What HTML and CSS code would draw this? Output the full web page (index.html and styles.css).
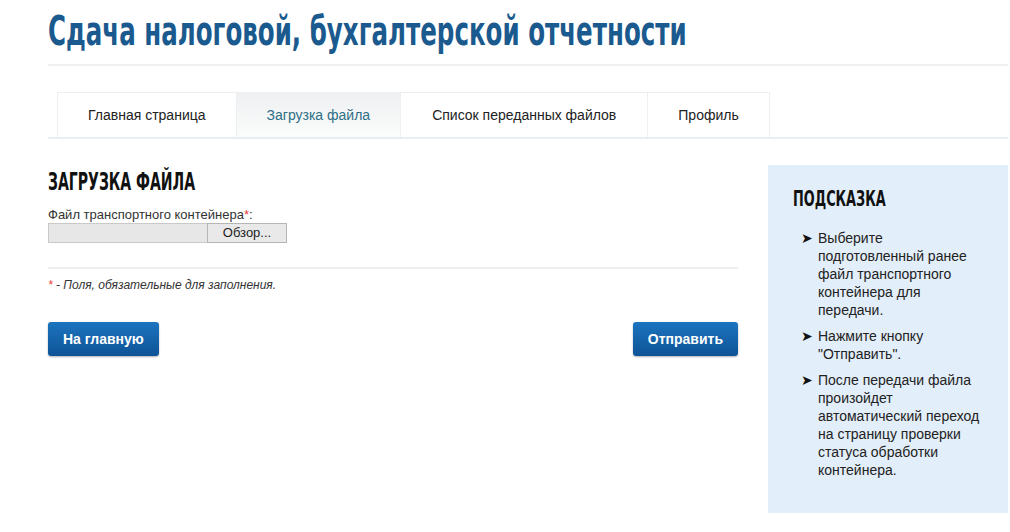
FILE: index.html
```html
<!DOCTYPE html>
<html lang="ru">
<head>
  <meta charset="UTF-8">
  <title>Сдача налоговой, бухгалтерской отчетности</title>
  <link rel="stylesheet" href="styles.css">
</head>
<body>
  <div class="page">
    <div class="title-bar">
      <h1 class="title">Сдача налоговой, бухгалтерской отчетности</h1>
    </div>

    <ul class="tabs">
      <li class="tab">Главная страница</li>
      <li class="tab active">Загрузка файла</li>
      <li class="tab">Список переданных файлов</li>
      <li class="tab">Профиль</li>
    </ul>

    <div class="content">
      <div class="main">
        <h2 class="section-title">Загрузка файла</h2>
        <label class="field-label">Файл транспортного контейнера<span class="req">*</span>:</label>
        <div class="file-input">
          <span class="file-name"></span>
          <span class="file-btn">Обзор...</span>
        </div>
        <div class="note"><span class="req">*</span> - Поля, обязательные для заполнения.</div>
        <div class="actions">
          <button class="btn">На главную</button>
          <button class="btn">Отправить</button>
        </div>
      </div>

      <div class="hint">
        <h3 class="hint-title">Подсказка</h3>
        <ul class="hint-list">
          <li>Выберите подготовленный ранее файл транспортного контейнера для передачи.</li>
          <li>Нажмите кнопку "Отправить".</li>
          <li>После передачи файла произойдет автоматический переход на страницу проверки статуса обработки контейнера.</li>
        </ul>
      </div>
    </div>
  </div>
</body>
</html>
```

FILE: styles.css
```css
body {
  margin: 0;
  background: #fff;
  font-family: "Liberation Sans", Arial, sans-serif;
  color: #222;
}

.page {
  width: 960px;
  padding: 0 0 0 48px;
}

/* condensed display face: DejaVu condensed squeezed to DIN-like proportions */
.title,
.section-title,
.hint-title {
  font-family: "DejaVu Sans Condensed", "DejaVu Sans", sans-serif;
  font-stretch: condensed;
  font-weight: bold;
  transform-origin: left center;
  white-space: nowrap;
}

.title-bar {
  padding: 9px 0 11px;
  border-bottom: 2px solid #f0f0f0;
}

.title {
  font-size: 41px;
  color: #1b5a8e;
  margin: 0;
  line-height: 44px;
  transform: scaleX(0.665);
}

.tabs {
  list-style: none;
  margin: 26px 0 0;
  padding: 0 0 0 9px;
  display: flex;
  border-bottom: 2px solid #e8eef1;
}

.tab {
  height: 44px;
  line-height: 44px;
  padding: 0 30px;
  font-size: 14px;
  color: #222;
  border: 1px solid #edf0f2;
  border-bottom: none;
  margin-right: -1px;
}

.tab:nth-child(3) {
  padding: 0 31px;
}

.tab.active {
  color: #2e6e86;
  background: linear-gradient(#eef0f1, #fbfcfc);
}

.content {
  display: flex;
  gap: 30px;
  margin-top: 26px;
}

.main {
  width: 690px;
}

.section-title {
  font-size: 24px;
  text-transform: uppercase;
  color: #111;
  margin: 4px 0 12px;
  line-height: 26px;
  transform: scaleX(0.65);
}

.field-label {
  display: block;
  font-size: 13px;
  color: #333;
  line-height: 15px;
}

.req {
  color: #e8403a;
}

.file-input {
  display: flex;
  height: 20px;
  margin-top: 1px;
  padding-bottom: 24px;
  border-bottom: 2px solid #eeeeee;
  width: 690px;
}

.file-name {
  width: 158px;
  background: #e7e7e7;
  border: 1px solid #c9c9c9;
  border-right: none;
}

.file-btn {
  width: 78px;
  border: 1px solid #b5b5b5;
  background: #e9e9e9;
  font-size: 13px;
  line-height: 18px;
  text-align: center;
  color: #222;
}

.note {
  font-size: 12px;
  font-style: italic;
  color: #333;
  margin-top: 9px;
}

.actions {
  display: flex;
  justify-content: space-between;
  margin-top: 30px;
}

.btn {
  height: 34px;
  padding: 0 15px;
  border: none;
  border-radius: 3px;
  background: linear-gradient(#1c74bf, #0e5396);
  box-shadow: 0 1px 2px rgba(0, 0, 0, 0.3);
  color: #fff;
  font-family: "Liberation Sans", Arial, sans-serif;
  font-weight: bold;
  font-size: 14px;
}

.hint {
  width: 240px;
  height: 348px;
  box-sizing: border-box;
  background: #e2eef9;
  padding: 22px 20px 0 25px;
}

.hint-title {
  font-size: 22px;
  text-transform: uppercase;
  color: #111;
  margin: 0 0 18px;
  line-height: 24px;
  transform: scaleX(0.65);
}

.hint-list {
  list-style: none;
  margin: 0;
  padding: 0 0 0 25px;
}

.hint-list li {
  position: relative;
  font-size: 14px;
  line-height: 18px;
  color: #222;
  margin-bottom: 8px;
}

.hint-list li::before {
  content: "➤";
  position: absolute;
  left: -17px;
  top: 0;
  font-size: 14px;
  color: #111;
}
```
